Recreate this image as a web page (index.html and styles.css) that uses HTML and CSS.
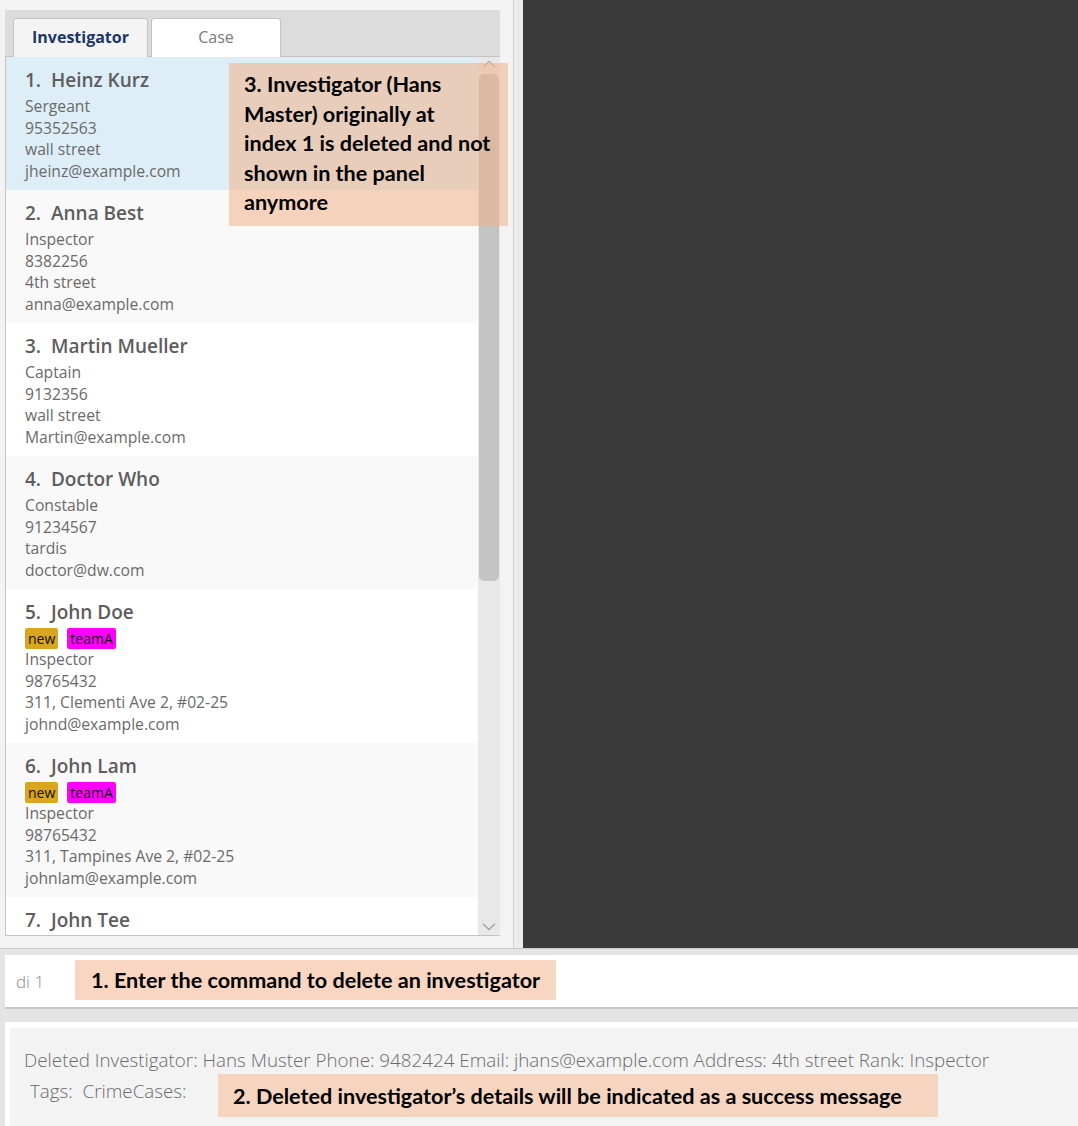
FILE: index.html
```html
<!DOCTYPE html>
<html>
<head>
<meta charset="utf-8">
<link rel="stylesheet" href="styles.css">
</head>
<body>
<div class="app">
  <div class="top">
    <div class="left">
      <div class="tabpane">
        <div class="tabbar">
          <div class="tab active">Investigator</div>
          <div class="tab">Case</div>
        </div>
        <div class="listwrap">
          <div class="list">
            <div class="card selected">
              <div class="name">1.&nbsp;&nbsp;Heinz Kurz</div>
              <div class="line">Sergeant</div>
              <div class="line">95352563</div>
              <div class="line">wall street</div>
              <div class="line">jheinz@example.com</div>
            </div>
            <div class="card alt">
              <div class="name">2.&nbsp;&nbsp;Anna Best</div>
              <div class="line">Inspector</div>
              <div class="line">8382256</div>
              <div class="line">4th street</div>
              <div class="line">anna@example.com</div>
            </div>
            <div class="card">
              <div class="name">3.&nbsp;&nbsp;Martin Mueller</div>
              <div class="line">Captain</div>
              <div class="line">9132356</div>
              <div class="line">wall street</div>
              <div class="line">Martin@example.com</div>
            </div>
            <div class="card alt">
              <div class="name">4.&nbsp;&nbsp;Doctor Who</div>
              <div class="line">Constable</div>
              <div class="line">91234567</div>
              <div class="line">tardis</div>
              <div class="line">doctor@dw.com</div>
            </div>
            <div class="card">
              <div class="name">5.&nbsp;&nbsp;John Doe</div>
              <div class="tags"><span class="tag gold">new</span><span class="tag pink">teamA</span></div>
              <div class="line">Inspector</div>
              <div class="line">98765432</div>
              <div class="line">311, Clementi Ave 2, #02-25</div>
              <div class="line">johnd@example.com</div>
            </div>
            <div class="card alt">
              <div class="name">6.&nbsp;&nbsp;John Lam</div>
              <div class="tags"><span class="tag gold">new</span><span class="tag pink">teamA</span></div>
              <div class="line">Inspector</div>
              <div class="line">98765432</div>
              <div class="line">311, Tampines Ave 2, #02-25</div>
              <div class="line">johnlam@example.com</div>
            </div>
            <div class="card last">
              <div class="name">7.&nbsp;&nbsp;John Tee</div>
            </div>
          </div>
          <div class="scrollbar">
            <svg class="arrow" width="14" height="8" viewBox="0 0 14 8"><path d="M1 7 L7 1.5 L13 7" fill="none" stroke="#b0b0b0" stroke-width="1.3"/></svg>
            <div class="track"><div class="thumb"></div></div>
            <svg class="arrow" width="14" height="8" viewBox="0 0 14 8"><path d="M1 1 L7 6.5 L13 1" fill="none" stroke="#a0a0a0" stroke-width="1.3"/></svg>
          </div>
        </div>
      </div>
      <div class="note note3">3. Investigator (Hans<br>Master) originally at<br>index 1 is deleted and not<br>shown in the panel<br>anymore</div>
    </div>
    <div class="divider"></div>
    <div class="dark"></div>
  </div>
  <div class="bottom">
    <div class="command">
      <span class="cmdtext">di 1</span>
      <span class="note note1">1. Enter the command to delete an investigator</span>
    </div>
    <div class="result">
      <div class="resultinner">
        <div class="msg">Deleted Investigator: Hans Muster Phone: 9482424 Email: jhans@example.com Address: 4th street Rank: Inspector</div>
        <div class="msgrow">
          <span class="msg2">Tags:&nbsp; CrimeCases:</span>
          <span class="note note2">2. Deleted investigator’s details will be indicated as a success message</span>
        </div>
      </div>
    </div>
  </div>
</div>
</body>
</html>
```
FILE: styles.css
```css
* { box-sizing: border-box; }
html, body { margin: 0; padding: 0; }
body {
  width: 1078px;
  height: 1126px;
  overflow: hidden;
  background: #f3f3f3;
  font-family: "Open Sans", "Noto Sans", sans-serif;
}
.app { display: flex; flex-direction: column; height: 1126px; }
.top { display: flex; height: 949px; border-bottom: 1px solid #c9c9c9; }
.left {
  position: relative;
  width: 513px;
  padding: 10px 13px 0 5px;
  background: #f3f3f3;
}
.tabpane { width: 495px; height: 926px; display: flex; flex-direction: column; }
.tabbar {
  height: 47px;
  background: #dcdcdc;
  border-bottom: 1px solid #c4c4c4;
  padding: 8px 0 0 8px;
  display: flex;
  gap: 3px;
}
.tab {
  height: 39px;
  margin-bottom: -1px;
  border: 1px solid #c4c4c4;
  border-bottom: none;
  border-radius: 3px 3px 0 0;
  background: #ffffff;
  color: #7a7a7a;
  font-size: 16px;
  display: flex;
  align-items: center;
  justify-content: center;
  width: 130px;
  padding-bottom: 2px;
}
.tab.active {
  width: 135px;
  background: #f4f4f4;
  color: #1b3767;
  font-weight: 700;
}
.listwrap {
  flex: 1;
  display: flex;
  border-left: 1px solid #c4c4c4;
  border-bottom: 1px solid #c4c4c4;
  overflow: hidden;
  background: #fff;
}
.list { flex: 1; overflow: hidden; }
.card {
  padding: 10px 0 8px 19px;
  background: #ffffff;
  color: #666666;
}
.card.alt { background: #f9f9f9; }
.card.selected { background: #ddeef6; }
.card.last { height: 40px; }
.name {
  font-size: 19px;
  font-weight: 600;
  color: #5d5d5d;
  line-height: 26px;
  margin-bottom: 3px;
}
.line {
  font-size: 15.7px;
  line-height: 21.5px;
  color: #6a6a6a;
}
.tags { display: flex; gap: 9px; height: 21px; align-items: center; margin-top: 1px; }
.tag {
  font-size: 14px;
  line-height: 21px;
  height: 21px;
  padding: 0 3px;
  border-radius: 2px;
  color: #111;
}
.tag.gold { background: #daa520; }
.tag.pink { background: #ff00ff; }
.scrollbar {
  width: 22px;
  background: #e8e8e8;
  display: flex;
  flex-direction: column;
  align-items: center;
}
.arrow { flex: none; margin: 3px 0 4px; }
.track { flex: 1; width: 100%; padding: 2px 1px; }
.thumb {
  height: 507px;
  background: #c4c4c4;
  border-radius: 5px;
}
.divider {
  width: 10px;
  border-left: 1px solid #cfcfcf;
  background: #ececec;
}
.dark { flex: 1; background: #3a3a3a; }
.note {
  background: #f8d6c1;
  color: #000;
  font-family: "Lato", "Open Sans", sans-serif;
  font-weight: 700;
  font-size: 21.6px;
}
.note3 {
  position: absolute;
  left: 229px;
  top: 63px;
  width: 279px;
  height: 163px;
  padding: 7px 0 0 15px;
  line-height: 29.5px;
  white-space: nowrap;
  background: rgba(242, 176, 134, 0.53);
}
.bottom {
  flex: 1;
  background: #e4e4e4;
  padding: 6px 0 0 5px;
  display: flex;
  flex-direction: column;
}
.command {
  height: 54px;
  background: #fff;
  border-bottom: 2px solid #c8c8c8;
  display: flex;
  align-items: center;
  padding: 0 0 0 11px;
}
.cmdtext {
  font-size: 17px;
  color: #8e8e8e;
  font-weight: 300;
  width: 59px;
}
.note1 {
  height: 40px;
  width: 481px;
  display: flex;
  align-items: center;
  padding-left: 16px;
  margin-bottom: 2px;
}
.result {
  flex: 1;
  margin-top: 13px;
  background: #fff;
  padding: 6px 0 0 5px;
}
.resultinner {
  height: 100%;
  background: #f3f3f3;
  padding: 19px 0 0 14px;
}
.msg, .msg2 {
  font-size: 18.8px;
  font-weight: 300;
  color: #6b6b6b;
  white-space: nowrap;
}
.msg { line-height: 26px; }
.msgrow { display: flex; align-items: flex-start; margin-top: 1px; }
.msg2 { padding: 4px 0 0 6px; width: 194px; }
.note2 {
  height: 43px;
  width: 720px;
  background: #f5d5c0;
  display: flex;
  align-items: center;
  padding-left: 15px;
}
```
